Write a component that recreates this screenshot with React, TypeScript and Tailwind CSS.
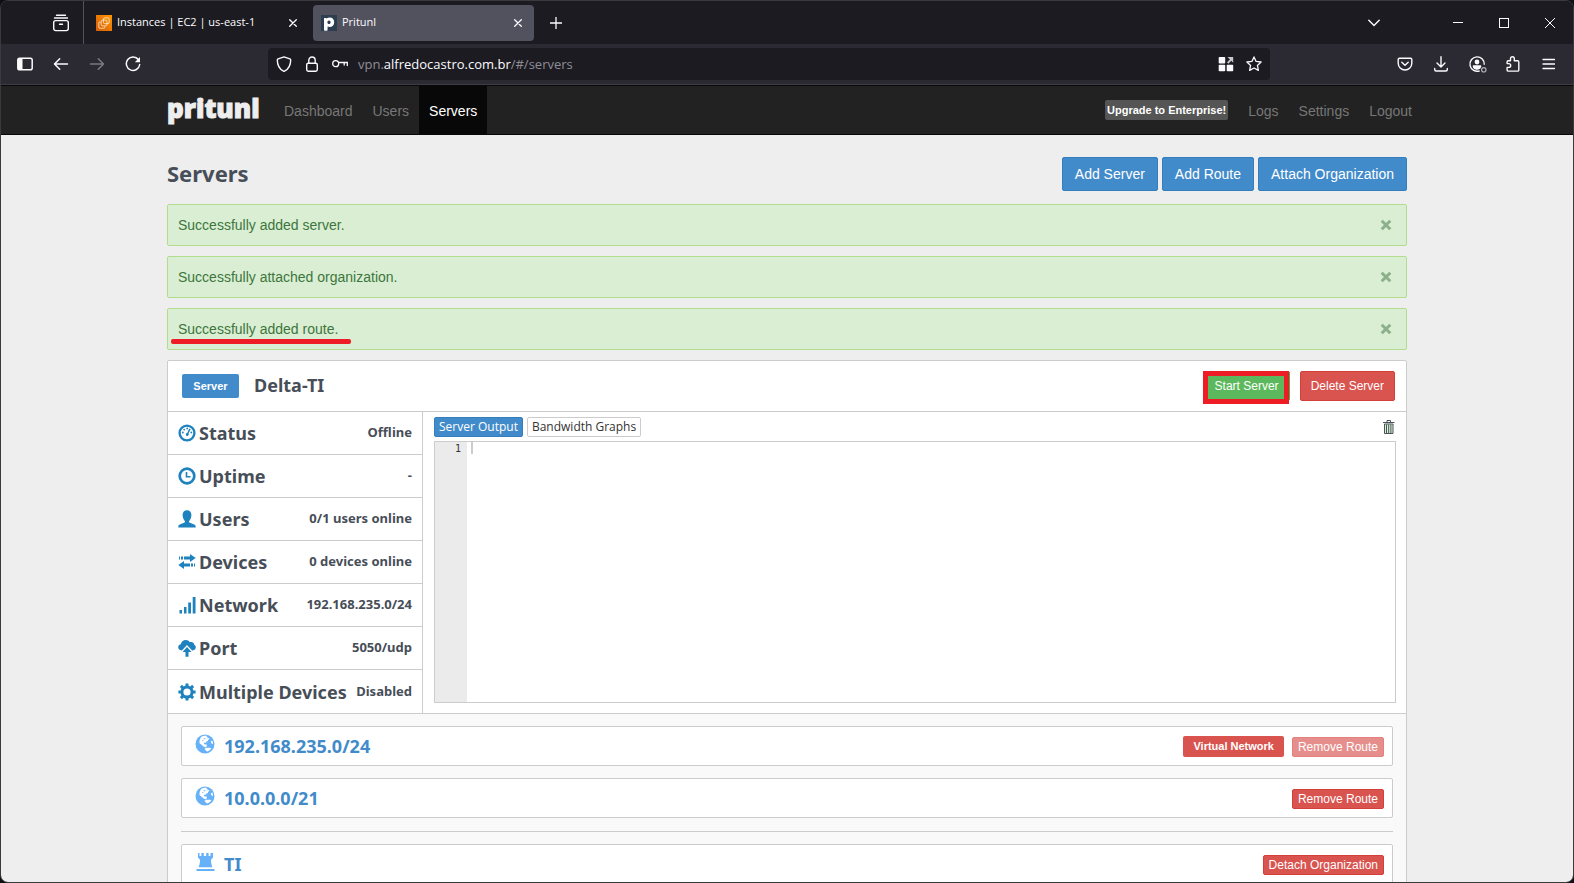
import React from 'react';

const uiFont = "font-['Open_Sans','Noto_Sans',sans-serif]";
const headFont = "font-['Noto_Sans','Open_Sans',sans-serif]";

interface IconProps {
  className?: string;
}

const TabCloseIcon: React.FC = () => (
  <svg className="h-2 w-2" viewBox="0 0 8 8" stroke="currentColor" strokeWidth="1.3" strokeLinecap="round">
    <path d="M0.7 0.7l6.6 6.6M7.3 0.7L0.7 7.3" />
  </svg>
);

const Ec2Icon: React.FC = () => (
  <svg className="h-4 w-4" viewBox="0 0 16 16" fill="none">
    <defs>
      <linearGradient id="ec2" x1="0" y1="1" x2="1" y2="0">
        <stop offset="0" stopColor="#d45b07" />
        <stop offset="1" stopColor="#ff9900" />
      </linearGradient>
    </defs>
    <rect width="16" height="16" fill="url(#ec2)" />
    <g stroke="#fff" strokeWidth="0.8" strokeOpacity="0.85">
      <rect x="7.4" y="2.9" width="5.8" height="5.8" rx="1.4" />
      <rect x="5.2" y="5.1" width="5.8" height="5.8" rx="1.4" />
      <path d="M4.6 7.2H3.4a.6.6 0 0 0-.6.6v4.8c0 .4.3.6.6.6h4.8c.4 0 .6-.2.6-.6v-1.2" />
    </g>
  </svg>
);

const PritunlIcon: React.FC = () => (
  <svg className="h-4 w-4" viewBox="0 0 16 16">
    <rect width="16" height="16" fill="#2c3e50" />
    <path
      fill="#fff"
      fillRule="evenodd"
      d="M3 3.3c1-.5 2-.4 2.5.1 1-.6 2-.9 3.2-.9 2.7 0 4.5 1.9 4.5 4.7 0 2.9-1.9 4.9-4.5 4.9-.8 0-1.5-.2-2.1-.5v3.2c0 .6-.5 1-1.2 1H3.9c-.6 0-.9-.4-.9-1zM8 5.4c-1 0-1.6.7-1.6 1.900S7 9.100 8 9.100s1.600-.7 1.600-1.800S9 5.400 8 5.400z"
    />
  </svg>
);

const FirefoxViewIcon: React.FC = () => (
  <svg className="h-[18px] w-[18px]" viewBox="0 0 18 18" fill="none" stroke="#fbfbfe" strokeWidth="1.4" strokeLinecap="round">
    <path d="M4.5 1.2h9M2.5 4h13" />
    <rect x="1.7" y="6.6" width="14.6" height="10" rx="2" />
    <path d="M7.5 10.2h3" />
  </svg>
);

const SidebarIcon: React.FC = () => (
  <svg className="h-4 w-4" viewBox="0 0 16 16" fill="none">
    <rect x="0.8" y="2.3" width="14.4" height="11.4" rx="1.8" stroke="#fbfbfe" strokeWidth="1.5" />
    <path d="M1 3h4.5v10H1z" fill="#fbfbfe" />
  </svg>
);

const BackIcon: React.FC<IconProps> = ({ className }) => (
  <svg className={`h-4 w-4 ${className || ''}`} viewBox="0 0 16 16" fill="none" stroke="currentColor" strokeWidth="1.5" strokeLinecap="round" strokeLinejoin="round">
    <path d="M14.5 8h-13M6.7 2.8L1.5 8l5.2 5.2" />
  </svg>
);

const ReloadIcon: React.FC = () => (
  <svg className="h-4 w-4" viewBox="0 0 16 16" fill="none">
    <path d="M13.5 3.8A6.7 6.7 0 1 0 14.7 8.5" stroke="#fbfbfe" strokeWidth="1.5" strokeLinecap="round" />
    <path d="M15 1v5.200H9.800z" fill="#fbfbfe" />
  </svg>
);

const ShieldIcon: React.FC = () => (
  <svg className="h-4 w-4" viewBox="0 0 16 16" fill="none" stroke="#fbfbfe" strokeWidth="1.4" strokeLinejoin="round">
    <path d="M8 .9l5.9 2c.5.2.8.6.8 1.1 0 5-1.6 8.8-6.2 11.2a1 1 0 0 1-1 0C2.9 12.8 1.3 9 1.3 4c0-.5.3-.9.8-1.1z" />
  </svg>
);

const LockIcon: React.FC = () => (
  <svg className="h-4 w-4" viewBox="0 0 16 16" fill="none" stroke="#fbfbfe" strokeWidth="1.4">
    <rect x="2.7" y="7.2" width="10.6" height="8" rx="1.6" />
    <path d="M4.8 7V4.2a3.2 3.2 0 0 1 6.4 0V7" />
  </svg>
);

const KeyIcon: React.FC = () => (
  <svg className="h-4 w-4" viewBox="0 0 16 16" fill="none" stroke="#fbfbfe" strokeWidth="1.3" strokeLinecap="round">
    <circle cx="3.7" cy="7.7" r="3" />
    <path d="M6.8 6.5h8.5v3M12.2 6.700v2.400" />
  </svg>
);

const GridArrowIcon: React.FC = () => (
  <svg className="h-4 w-4" viewBox="0 0 16 16" fill="#fbfbfe">
    <rect x="0.7" y="1" width="6.5" height="6.5" rx="0.8" />
    <rect x="0.7" y="8.7" width="6.5" height="6.5" rx="0.8" />
    <rect x="8.7" y="8.7" width="6.5" height="6.5" rx="0.8" />
    <path d="M9.5 1h5.700v5.700l-1.900-1.900-2.900 2.900-1.400-1.400 2.900-2.900z" fill="#c8c8cc" />
  </svg>
);

const StarIcon: React.FC = () => (
  <svg className="h-4 w-4" viewBox="0 0 16 16" fill="none" stroke="#fbfbfe" strokeWidth="1.3" strokeLinejoin="round">
    <path d="M8 .9l2.100 4.500 5 .6-3.700 3.400 1 5L8 12l-4.400 2.400 1-5L.9 6l5-.6z" />
  </svg>
);

const PocketIcon: React.FC = () => (
  <svg className="h-4 w-4" viewBox="0 0 16 16" fill="none" stroke="#fbfbfe" strokeWidth="1.4" strokeLinecap="round" strokeLinejoin="round">
    <path d="M2.500 2.200h11c.8 0 1.300.5 1.300 1.300v3.700a6.800 6.800 0 0 1-13.600 0V3.500c0-.8.5-1.300 1.300-1.300z" />
    <path d="M4.800 6.200L8 9.300l3.200-3.100" />
  </svg>
);

const DownloadIcon: React.FC = () => (
  <svg className="h-4 w-4" viewBox="0 0 16 16" fill="none" stroke="#fbfbfe" strokeWidth="1.4" strokeLinecap="round" strokeLinejoin="round">
    <path d="M8 .8v10M4 7l4 4 4-4M1.700 12.500v1c0 .9.600 1.500 1.500 1.500h9.600c.9 0 1.500-.6 1.500-1.500v-1" />
  </svg>
);

const AccountIcon: React.FC = () => (
  <svg className="h-4 w-4 overflow-visible" viewBox="0 0 16 16" fill="none">
    <path d="M15.300 8.700A7.200 7.200 0 1 0 10.700 14.800" stroke="#fbfbfe" strokeWidth="1.4" />
    <circle cx="8" cy="6" r="2.400" fill="#fbfbfe" />
    <path d="M3.700 9.900c0-.4.3-.7.700-.7h7.200c.4 0 .7.3.7.7 0 2-1.800 3.800-4.300 3.800s-4.300-1.800-4.300-3.800z" fill="#fbfbfe" />
    <circle cx="14.800" cy="13.800" r="2.200" stroke="#b0b0b6" strokeWidth="1.2" />
  </svg>
);

const PuzzleIcon: React.FC = () => (
  <svg className="h-4 w-4" viewBox="0 0 16 16" fill="none" stroke="#fbfbfe" strokeWidth="1.4" strokeLinejoin="round">
    <path d="M5.500 4.700V2.600a1.900 1.900 0 0 1 3.800 0v2.100h3.300c.7 0 1.200.5 1.200 1.200v8c0 .7-.5 1.200-1.200 1.200H3.300c-.7 0-1.200-.5-1.200-1.200v-2.500h1.700a1.900 1.900 0 0 0 0-3.800H2.100V5.900c0-.7.5-1.200 1.200-1.200z" />
  </svg>
);

const MenuIcon: React.FC = () => (
  <svg className="h-4 w-4" viewBox="0 0 16 16" stroke="#fbfbfe" strokeWidth="1.3" strokeLinecap="round">
    <path d="M2 3.500h11.500M2 8h11.500M2 12.500h11.500" />
  </svg>
);

const RemoveIcon: React.FC = () => (
  <svg className="h-3 w-3" viewBox="0 0 12 12" fill="none" stroke="currentColor" strokeWidth="3">
    <path d="M1.700 1.700l8.600 8.600M10.300 1.700l-8.600 8.600" />
  </svg>
);

const TrashIcon: React.FC = () => (
  <svg className="h-[14px] w-3" viewBox="0 0 12 14" fill="none" stroke="#4a525c">
    <path d="M1.500 4h8.500v9.500h-8.500z" fill="#d7f3cf" />
    <path d="M0 2.500h11.500M4 2V.500h3.500V2M3.500 4.500v8.500M5.700 4.500v8.500M7.900 4.500v8.500" />
  </svg>
);

const DashboardIcon: React.FC = () => (
  <svg className="h-[18px] w-[18px]" viewBox="0 0 18 18" fill="none">
    <circle cx="9" cy="9" r="7.400" stroke="currentColor" strokeWidth="2.400" />
    <g fill="currentColor">
      <circle cx="4.800" cy="8.500" r="0.900" />
      <circle cx="6.200" cy="5.600" r="0.900" />
      <circle cx="9.200" cy="4.500" r="0.900" />
      <circle cx="13.300" cy="8.500" r="0.900" />
      <path d="M11.300 4.600l1.400.7-2.200 4.200a1.500 1.500 0 1 1-1.300-.6z" />
    </g>
  </svg>
);

const TimeIcon: React.FC = () => (
  <svg className="h-[18px] w-[18px]" viewBox="0 0 18 18" fill="none" stroke="currentColor">
    <circle cx="9" cy="9" r="7.300" strokeWidth="2.700" />
    <path d="M8.500 5v4.700h4" strokeWidth="1.600" />
  </svg>
);

const UserIcon: React.FC = () => (
  <svg className="h-[18px] w-[18px]" viewBox="0 0 18 18" fill="currentColor">
    <path d="M9 .3c2.600 0 4.400 1.700 4.400 4.700 0 2.300-.9 4.600-2.200 5.900-.3.4-.3 1.200.2 1.500l4.800 2.200c1 .5 1.500 1.100 1.500 2.100v.8H.3v-.8c0-1 .5-1.600 1.500-2.100l4.800-2.200c.5-.3.5-1.100.2-1.500C5.500 9.600 4.600 7.300 4.600 5 4.600 2 6.400.3 9 .3z" />
  </svg>
);

const TransferIcon: React.FC = () => (
  <svg className="h-[18px] w-[18px]" viewBox="0 0 18 18" fill="currentColor">
    <path d="M1 3.500h1v3H1zM3 3.500h2v3H3zM6 3.500h6V1l5.700 4L12 9V6.500H6zM17 10.500h-1v3h1zM15 10.500h-2v3h2zM12 10.500H6V8L.3 12 6 16v-2.500h6z" />
  </svg>
);

const SignalIcon: React.FC = () => (
  <svg className="h-[18px] w-[18px]" viewBox="0 0 18 18" fill="currentColor">
    <path d="M1.500 14h2.500v3.500H1.500zM6 11h2.500v6.500H6zM10.200 6.500h2.800v11h-2.800zM14.700 1h2.800v16.500h-2.800z" />
  </svg>
);

const CloudUploadIcon: React.FC = () => (
  <svg className="h-[18px] w-[18px]" viewBox="0 0 18 18" fill="currentColor">
    <path d="M3.600 11.400C1.700 11.400.2 10.100.2 8.300c0-1.600 1.100-2.900 2.700-3.100C3.200 2.700 5.200.9 7.700.9c1.700 0 3.300.9 4.100 2.300.4-.2.9-.3 1.400-.3 1.700 0 3 1.300 3.100 2.900.9.500 1.500 1.400 1.500 2.500 0 1.700-1.400 3.100-3.100 3.100h-.6L9 5.900l-5.100 5.500z" />
    <path d="M9 8l4.500 5h-3v4.800h-3V13h-3z" />
  </svg>
);

const CogIcon: React.FC = () => (
  <svg className="h-[18px] w-[18px]" viewBox="0 0 18 18" fill="none" stroke="currentColor">
    <circle cx="9" cy="9" r="5.100" strokeWidth="3" />
    <path d="M9 .4v3M9 14.600v3M.4 9h3M14.600 9h3M2.900 2.900L5 5M13 13l2.100 2.100M2.900 15.100L5 13M13 5l2.100-2.100" strokeWidth="3" />
  </svg>
);

const GlobeIcon: React.FC = () => (
  <svg className="-mt-1 h-5 w-5" viewBox="0 0 20 20">
    <circle cx="10" cy="10" r="9.500" fill="#66b1f7" />
    <path
      fill="#fff"
      d="M6.200 2.800c1.500-1 4-1.400 5.800-1l-.6 1 1.500.1-.8 1.300 1.800-.3.800.9-1.500 1-.5 1.500-1.600.3.2 1.200-1.800-.3-.8 1.600 1.500.4 1.200-.2.600 1.300-1 .6 1.200.6-1.100.6c-1.300-.5-2.900-.7-3.600-1.900-1-.8-2.300-1.200-3-2.400-.3-2 .4-4.500 1.700-6.300z"
    />
    <path fill="#fff" d="M9.500 14.400c1.700-.9 3.800-.8 5.600-.6l1.300.4c-.9 1.500-2.400 2.800-4.200 3.400-1.200-.7-2.200-1.800-2.700-3.200zM15.800 7.200l1.500-.6c.5 1.100.8 2.300.8 3.500l-1.600-.5z" />
    <path fill="#66b1f7" d="M8.700 4.300h1.600v1H8.700zM7.300 6.100h1v1h-1z" />
  </svg>
);

const TowerIcon: React.FC = () => (
  <svg className="-mt-1 h-5 w-5" viewBox="0 0 20 20" fill="#66b1f7">
    <path d="M3 1h1.500v3h1.900V1h2.400v3h2.400V1h2.400v3h1.900V1H18v4.500l-2 2.300c0 2.700.3 4.900 1.400 7.400H3.600C4.700 12.700 5 10.500 5 7.800L3 5.500zM1.500 17h18v2h-18z" />
  </svg>
);

const WindowTabs: React.FC = () => (
  <div className="flex h-[43px] shrink-0 items-center bg-[#1c1b22] text-[#fbfbfe]">
    <button aria-label="Firefox View" className="ml-[51px] flex h-9 w-[18px] items-center justify-center">
      <FirefoxViewIcon />
    </button>
    <div className="ml-[13px] h-full w-px bg-[#52525e]" />
    <div className="flex h-9 w-[221px] items-center pr-1 pl-3 text-[11px]">
      <Ec2Icon />
      <span className="ml-[5px] flex-1 whitespace-nowrap">Instances | EC2 | us-east-1</span>
      <button aria-label="Close tab" className="flex h-4 w-4 items-center justify-center">
        <TabCloseIcon />
      </button>
    </div>
    <div className="ml-2 flex h-9 w-[221px] items-center rounded bg-[#52525e] px-2 text-[11px]">
      <PritunlIcon />
      <span className="ml-[5px] flex-1">Pritunl</span>
      <button aria-label="Close tab" className="flex h-4 w-4 items-center justify-center">
        <TabCloseIcon />
      </button>
    </div>
    <button aria-label="New tab" className="ml-[14px] flex h-4 w-4 items-center justify-center">
      <svg className="h-3 w-3" viewBox="0 0 12 12" stroke="currentColor" strokeWidth="1.3">
        <path d="M6 0v12M0 6h12" />
      </svg>
    </button>
    <div className="ml-auto flex items-center">
      <button aria-label="List all tabs" className="mr-[53px] flex h-4 w-4 items-center justify-center">
        <svg className="h-3 w-3" viewBox="0 0 12 12" fill="none" stroke="currentColor" strokeWidth="1.4" strokeLinecap="round">
          <path d="M.8 3.200L6 8.600l5.200-5.400" />
        </svg>
      </button>
      <button aria-label="Minimize" className="flex h-9 w-[46px] items-center justify-center">
        <span className="h-px w-[10px] bg-[#fbfbfe]" />
      </button>
      <button aria-label="Maximize" className="flex h-9 w-[46px] items-center justify-center">
        <span className="h-[10px] w-[10px] border border-[#fbfbfe]" />
      </button>
      <button aria-label="Close window" className="flex h-9 w-[46px] items-center justify-center">
        <svg className="h-[10px] w-[10px]" viewBox="0 0 10 10" stroke="currentColor" strokeWidth="1">
          <path d="M0 0l10 10M10 0L0 10" />
        </svg>
      </button>
    </div>
  </div>
);

const AddressBar: React.FC = () => (
  <div className="flex h-[41px] shrink-0 items-center border-b border-[#3e3d46] bg-[#2b2a33] text-[#fbfbfe]">
    <div className="flex items-center gap-5 pl-4">
      <button aria-label="Sidebar"><SidebarIcon /></button>
      <button aria-label="Back"><BackIcon /></button>
      <button aria-label="Forward" disabled><BackIcon className="rotate-180 text-[#7b7a82]" /></button>
      <button aria-label="Reload"><ReloadIcon /></button>
    </div>
    <div className="ml-[127px] flex h-8 flex-1 items-center rounded bg-[#1c1b22] px-2">
      <ShieldIcon />
      <span className="ml-3"><LockIcon /></span>
      <span className="ml-3"><KeyIcon /></span>
      <a href="#/servers" className="ml-[10px] flex-1 pt-0.5 text-[13px] text-[#8f8e97]">
        vpn.<span className="text-[#fbfbfe]">alfredocastro.com.br</span>/#/servers
      </a>
      <button aria-label="Apps"><GridArrowIcon /></button>
      <button aria-label="Bookmark" className="ml-3"><StarIcon /></button>
    </div>
    <div className="ml-[127px] flex items-center gap-5 pr-4">
      <button aria-label="Pocket"><PocketIcon /></button>
      <button aria-label="Downloads"><DownloadIcon /></button>
      <button aria-label="Account"><AccountIcon /></button>
      <button aria-label="Extensions"><PuzzleIcon /></button>
      <button aria-label="Menu"><MenuIcon /></button>
    </div>
  </div>
);

const NavBar: React.FC = () => (
  <nav className="border-y border-[#080808] bg-[#222] text-sm leading-[50px] text-[#777]">
    <div className="mx-auto flex h-12 max-w-[1270px] items-center pl-[15px]">
      <a href="#/" className="mr-[15px] w-[92px] pb-1 font-['Open_Sans',sans-serif] text-[26px] leading-10 font-extrabold text-[#eee] [-webkit-text-stroke:1px_#eee]">
        pritunl
      </a>
      <a href="#/dashboard" className="h-12 px-[10px]">Dashboard</a>
      <a href="#/users" className="h-12 px-[10px]">Users</a>
      <a href="#/servers" className="h-12 bg-[#080808] px-[10px] text-white">Servers</a>
      <div className="ml-auto flex items-center">
        <a href="#/upgrade" className="mr-[10px] rounded-xs bg-[#555] px-0.5 text-[11px] leading-5 font-bold text-white">
          Upgrade to Enterprise!
        </a>
        <a href="#/logs" className="h-12 px-[10px]">Logs</a>
        <a href="#/settings" className="h-12 px-[10px]">Settings</a>
        <a href="#/logout" className="h-12 px-[10px]">Logout</a>
      </div>
    </div>
  </nav>
);

const PrimaryButton: React.FC<{ children: React.ReactNode }> = ({ children }) => (
  <button className="h-[34px] rounded-xs border border-[#357ebd] bg-[#428bca] px-3 text-sm text-white">{children}</button>
);

const Alert: React.FC<{ message: string; underlined?: boolean }> = ({ message, underlined }) => (
  <div role="alert" className="relative flex h-[42px] items-center justify-between rounded-xs border border-[#b2dd8f] bg-[#daeed3] pr-[14px] pl-[10px] text-sm text-[#3c763d]">
    <span>{message}</span>
    <button aria-label="Close" className="text-[#8cb08a]"><RemoveIcon /></button>
    {underlined && <span className="absolute bottom-[5px] left-[3px] h-[5px] w-[180px] rounded-xs bg-[#ee1c25]" />}
  </div>
);

const stats = [
  { label: 'Status', value: 'Offline', Icon: DashboardIcon },
  { label: 'Uptime', value: '-', Icon: TimeIcon },
  { label: 'Users', value: '0/1 users online', Icon: UserIcon },
  { label: 'Devices', value: '0 devices online', Icon: TransferIcon },
  { label: 'Network', value: '192.168.235.0/24', Icon: SignalIcon },
  { label: 'Port', value: '5050/udp', Icon: CloudUploadIcon },
  { label: 'Multiple Devices', value: 'Disabled', Icon: CogIcon },
];

const StatList: React.FC = () => (
  <ul className={`w-[255px] shrink-0 divide-y divide-[#ccc] border-r border-[#ccc] font-bold text-[#474e58] ${headFont}`}>
    {stats.map(({ label, value, Icon }) => (
      <li key={label} className="flex h-[43px] items-center px-[10px] whitespace-nowrap">
        <span className="text-[#1e82be]"><Icon /></span>
        <span className="ml-[3px] text-lg">{label}</span>
        <span className="ml-auto text-[13px]">{value}</span>
      </li>
    ))}
  </ul>
);

const ServerOutput: React.FC = () => (
  <div className="flex flex-1 flex-col pt-[5px] pr-[10px] pb-[10px] pl-[11px]">
    <div className={`flex items-center gap-1 text-xs ${uiFont}`}>
      <button className="h-5 rounded-xs border border-[#357ebd] bg-[#428bca] px-1 text-white">Server Output</button>
      <button className="h-5 rounded-xs border border-[#ccc] bg-white px-1 text-[#333]">Bandwidth Graphs</button>
      <button aria-label="Clear output" className="mr-[1px] ml-auto"><TrashIcon /></button>
    </div>
    <div className="mt-1 flex flex-1 border border-[#ccc]">
      <div className="w-8 bg-[#ebebeb] pr-[6px] text-right font-['DejaVu_Sans_Mono',monospace] text-[10px] leading-[13px] text-[#333]">1</div>
      <div className="ml-1 h-3 w-[2px] bg-[#ccc]" />
    </div>
  </div>
);

interface ServerItemProps {
  name: string;
  action: string;
  icon: React.ReactNode;
  disabled?: boolean;
  tag?: string;
}

const ServerItem: React.FC<ServerItemProps> = ({ name, action, icon, disabled, tag }) => (
  <div className="flex h-10 items-center rounded-xs border border-[#ccc] bg-white pr-2 pl-[13px]">
    {icon}
    <a href="#/servers" className={`ml-[9px] text-lg leading-9 font-bold text-[#428bca] ${headFont}`}>{name}</a>
    <div className="ml-auto flex h-[22px] items-end gap-2">
      {tag && <span className="rounded-xs bg-[#d9534f] px-[10px] text-[11px] leading-[21px] font-bold text-white">{tag}</span>}
      <button disabled={disabled} className="h-5 rounded-xs border border-[#d43f3a] bg-[#d9534f] px-[5px] text-xs text-white disabled:opacity-65">
        {action}
      </button>
    </div>
  </div>
);

const ServerPanel: React.FC = () => (
  <section className="mt-[10px] rounded-xs border border-[#ccc] bg-white">
    <header className="flex h-[50px] items-center pr-[11px] pl-[14px]">
      <span className="w-[57px] rounded-xs bg-[#428bca] text-center text-[11px] leading-6 font-bold text-white">Server</span>
      <h3 className={`ml-[15px] pb-0.5 text-lg font-bold text-[#474e58] ${headFont}`}>Delta-TI</h3>
      <div className="ml-auto flex gap-[10px]">
        <div className="relative">
          <button className="h-[30px] rounded-xs border border-[#4cae4c] bg-[#5cb85c] px-[10px] text-xs text-white">Start Server</button>
          <span className="pointer-events-none absolute top-0 -bottom-[3px] -left-px right-px border-5 border-[#ee1c25]" />
        </div>
        <button className="h-[30px] rounded-xs border border-[#d43f3a] bg-[#d9534f] px-[10px] text-xs text-white">Delete Server</button>
      </div>
    </header>
    <div className="flex border-y border-[#ccc]">
      <StatList />
      <ServerOutput />
    </div>
    <div className="flex flex-col gap-3 bg-[#f9f9f9] px-[13px] py-3">
      <ServerItem name="192.168.235.0/24" action="Remove Route" icon={<GlobeIcon />} tag="Virtual Network" disabled />
      <ServerItem name="10.0.0.0/21" action="Remove Route" icon={<GlobeIcon />} />
      <hr className="mt-px border-[#ccc]" />
      <ServerItem name="TI" action="Detach Organization" icon={<TowerIcon />} />
    </div>
  </section>
);

const App: React.FC = () => (
  <div className="h-screen bg-[#0c0f14]">
    <div className={`flex h-full flex-col overflow-hidden rounded-lg border border-[#3a3a3e] ${uiFont}`}>
      <WindowTabs />
      <AddressBar />
      <main className="min-h-0 flex-1 overflow-hidden bg-[#eee] font-['Liberation_Sans',Arial,sans-serif]">
        <NavBar />
        <div className="mx-auto max-w-[1240px] pt-[22px]">
          <div className="mb-[13px] flex items-start justify-between">
            <h2 className={`text-[22px] leading-8 font-bold text-[#474e58] ${headFont}`}>Servers</h2>
            <div className="flex gap-1">
              <PrimaryButton>Add Server</PrimaryButton>
              <PrimaryButton>Add Route</PrimaryButton>
              <PrimaryButton>Attach Organization</PrimaryButton>
            </div>
          </div>
          <div className="flex flex-col gap-[10px]">
            <Alert message="Successfully added server." />
            <Alert message="Successfully attached organization." />
            <Alert message="Successfully added route." underlined />
          </div>
          <ServerPanel />
        </div>
      </main>
    </div>
  </div>
);

export default App;
